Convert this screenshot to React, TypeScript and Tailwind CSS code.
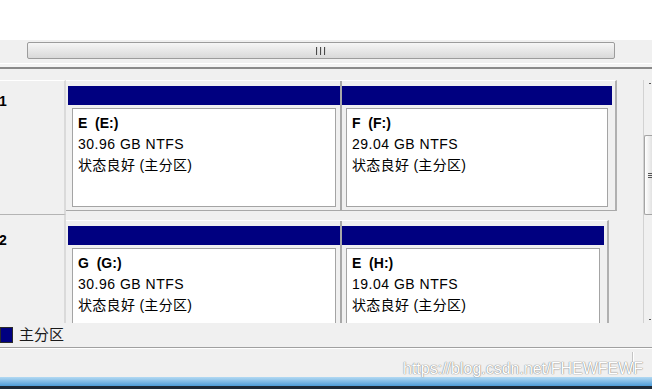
import React from "react";

interface Part {
  name: string;
  size: string;
  cell: string;
}

interface Disk {
  label: string;
  row: string;
  labelCell: string;
  box: string;
  parts: Part[];
}

const DISKS: Disk[] = [
  {
    label: "1",
    row: "h-[135px]",
    labelCell: "border-t border-t-white border-b border-b-[#b4b4b4] pt-[12px]",
    box: "w-[551px] h-[131px]",
    parts: [
      { name: "E  (E:)", size: "30.96 GB NTFS", cell: "w-[274px] pl-[2px]" },
      { name: "F  (F:)", size: "29.04 GB NTFS", cell: "w-[273px] pr-[3px]" },
    ],
  },
  {
    label: "2",
    row: "h-[140px]",
    labelCell: "pt-[17px]",
    box: "mt-[5px] w-[543px] h-[131px]",
    parts: [
      { name: "G  (G:)", size: "30.96 GB NTFS", cell: "w-[274px] pl-[2px]" },
      { name: "E  (H:)", size: "19.04 GB NTFS", cell: "w-[265px] pr-[3px]" },
    ],
  },
];

function PartitionCell({ part }: { part: Part }) {
  return (
    <div className={`flex shrink-0 flex-col ${part.cell}`}>
      <div className="h-[19px] bg-[#000080]" />
      <div className="mx-[4px] mt-[3px] h-[99px] border border-[#a4a4a4] bg-white pl-[5px] pt-[4px] text-[14px] leading-[21px] text-black">
        <div className="font-bold whitespace-pre">{part.name}</div>
        <div className="tracking-[0.5px]">{part.size}</div>
        <div className="tracking-[0.3px]">状态良好 (主分区)</div>
      </div>
    </div>
  );
}

function DiskRow({ disk }: { disk: Disk }) {
  return (
    <div className={`flex items-start ${disk.row}`}>
      <div
        className={`h-full w-[66px] shrink-0 border-r-2 border-r-[#dadada] text-[14px] leading-[16px] font-bold text-black ${disk.labelCell}`}
      >
        <span className="-ml-px">{disk.label}</span>
      </div>
      <div
        className={`flex shrink-0 border-t border-r-2 border-b border-t-white border-r-[#b0b0b0] border-b-[#a8a8a8] bg-[#f0f0f0] pt-[5px] ${disk.box}`}
      >
        <PartitionCell part={disk.parts[0]} />
        <div className="-mt-[5px] w-[2px] shrink-0 bg-[#a8a8a8]" />
        <PartitionCell part={disk.parts[1]} />
      </div>
    </div>
  );
}

export default function App() {
  return (
    <div className="relative h-[389px] w-[652px] overflow-hidden bg-white font-['Liberation_Sans','Noto_Sans_CJK_SC',sans-serif]">
      <div className="h-[40px] bg-white" />

      {/* horizontal scrollbar */}
      <div className="h-[23px] bg-[#f0f0f0] pl-[27px] pt-[2px]">
        <div className="flex h-[17px] w-[588px] items-center justify-center rounded-[2px] border border-[#9c9c9c] bg-linear-to-b from-[#f6f6f6] to-[#d9d9d9]">
          <div className="flex gap-[2px]">
            <span className="h-[8px] w-[2px] border-l border-l-[#4a4a4a] bg-[#d8d8d8]" />
            <span className="h-[8px] w-[2px] border-l border-l-[#4a4a4a] bg-[#d8d8d8]" />
            <span className="h-[8px] w-[2px] border-l border-l-[#4a4a4a] bg-[#d8d8d8]" />
          </div>
        </div>
      </div>
      <div className="h-[4px] border-t border-t-white bg-[#f4f4f4]" />
      <div className="h-[2px] bg-[#8a8a8a]" />

      {/* disk area */}
      <div className="flex h-[254px] overflow-hidden bg-[#f0f0f0]">
        <div className="w-[643px] shrink-0 overflow-hidden pt-[11px]">
          {DISKS.map((d) => (
            <DiskRow key={d.label} disk={d} />
          ))}
        </div>
        <div className="relative w-[9px] shrink-0 bg-[#f0f0f0] pt-[11px]">
          <div className="flex h-full flex-col border-l border-l-[#d2d2d2]">
            <div className="ml-[5px] mt-[3px] h-px w-[2px] bg-[#555]" />
            <div className="mt-[51px] flex h-[80px] flex-col items-center justify-center gap-[1px] rounded-l-[2px] border border-r-0 border-[#a4a4a4] bg-linear-to-r from-white to-[#e2e2e2] pl-[2px]">
              <span className="h-px w-[4px] bg-[#555]" />
              <span className="h-px w-[4px] bg-[#555]" />
              <span className="h-px w-[4px] bg-[#555]" />
            </div>
            <div className="ml-[5px] mt-[104px] h-px w-[2px] bg-[#555]" />
          </div>
        </div>
      </div>

      {/* legend */}
      <div className="flex h-[24px] items-center bg-[#f0f0f0]">
        <div className="h-[16px] w-[13px] border border-[#2a2a2a] bg-[#000080]" />
        <span className="ml-[6px] text-[15px] leading-[18px] text-[#1a1a1a]">主分区</span>
      </div>
      <div className="h-px bg-[#a0a0a0]" />
      <div className="h-px bg-white" />

      {/* status bar */}
      <div className="flex h-[28px] bg-[#f0f0f0] pl-[632px] pt-[3px]">
        <div className="h-[20px] w-[2px] border-l border-l-[#c4c4c4] bg-white" />
      </div>
      <div className="h-[9px] bg-linear-to-b from-[#b3daf3] to-[#4d9cd7]" />
      <div className="h-[3px] bg-[#1d2936]" />

      {/* watermark */}
      <div className="absolute left-[403px] top-[360px] text-[16px] leading-[18px] text-white [text-shadow:0_0_1px_#7c7c7c,0_0_1px_#7c7c7c]">
        https://blog.csdn.net/FHEWFEWF
      </div>
    </div>
  );
}
